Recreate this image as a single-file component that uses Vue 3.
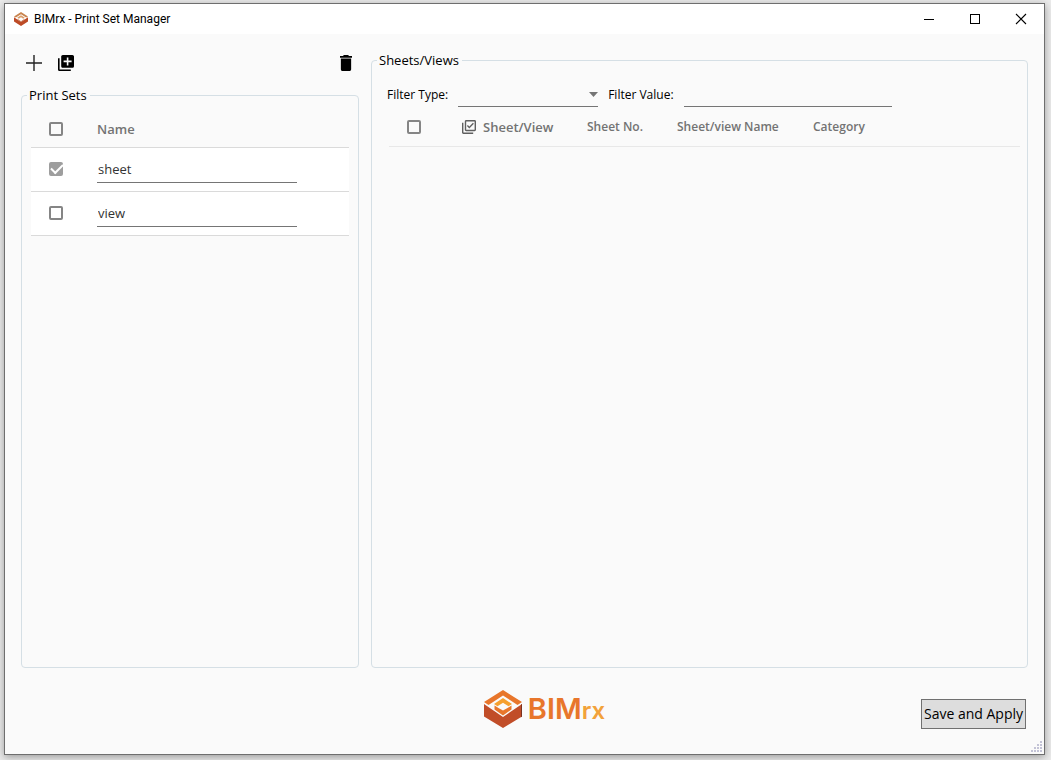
<script setup>
import { ref } from 'vue'

const sets = ref([
  { name: 'sheet', checked: true },
  { name: 'view', checked: false },
])
const allSets = ref(false)
const allSheets = ref(false)
const filterType = ref('')
const filterValue = ref('')
const removeChecked = () => {
  sets.value = sets.value.filter((s) => !s.checked)
}
const addSet = () => sets.value.push({ name: '', checked: false })
const duplicateChecked = () => {
  sets.value.push(...sets.value.filter((s) => s.checked).map((s) => ({ ...s, checked: false })))
}
</script>

<template>
  <div class="desktop">
    <div class="window">
      <header class="titlebar">
        <svg class="app-icon" viewBox="0 0 38 38" aria-hidden="true">
          <path d="M19 0 38 12 33 15 19 6 5 15 0 12Z" fill="#c9854f" />
          <path d="M19 9 29 15 25 18 19 14 13 18 9 15Z" fill="#dd9d6a" />
          <path d="M9 18 19 25 29 18V20L19 27 9 20Z" fill="#b9653c" />
          <path d="M0 14 19 27 38 14V26L19 38 0 26Z" fill="#bd4b27" />
        </svg>
        <h1>BIMrx - Print Set Manager</h1>
        <div class="controls">
          <button type="button" aria-label="Minimize">
            <svg viewBox="0 0 10 10" shape-rendering="crispEdges"><path d="M0 5h10v1H0z" /></svg>
          </button>
          <button type="button" aria-label="Maximize">
            <svg viewBox="0 0 10 10" shape-rendering="crispEdges"><path d="M.5 .5h9v9h-9z" fill="none" stroke="#000" /></svg>
          </button>
          <button type="button" aria-label="Close">
            <svg viewBox="0 0 10 10"><path d="M0 0 10 10M10 0 0 10" fill="none" stroke="#000" stroke-width="1.1" /></svg>
          </button>
        </div>
      </header>

      <main class="content">
        <section class="left">
          <div class="toolbar">
            <button type="button" aria-label="Add print set" @click="addSet">
              <svg width="16" height="16" viewBox="0 0 16 16"><path d="M7.3 0h1.4v7.3H16v1.4H8.7V16H7.3V8.7H0V7.3h7.3z" fill="#222" /></svg>
            </button>
            <button type="button" aria-label="Duplicate print set" @click="duplicateChecked">
              <svg width="16" height="16" viewBox="2 2 20 20"><path d="M4 6H2v14c0 1.100.9 2 2 2h14v-2H4V6zm16-4H8c-1.100 0-2 .9-2 2v12c0 1.100.9 2 2 2h12c1.100 0 2-.9 2-2V4c0-1.100-.9-2-2-2zm-1 9h-4v4h-2v-4H9V9h4V5h2v4h4v2z" /></svg>
            </button>
            <button type="button" class="delete" aria-label="Delete print set" @click="removeChecked">
              <svg width="12" height="16" viewBox="5 3 14 18" preserveAspectRatio="none"><path d="M6 19c0 1.100.9 2 2 2h8c1.100 0 2-.9 2-2V7H6v12zM19 4h-3.500l-1-1h-5l-1 1H5v2h14V4z" /></svg>
            </button>
          </div>

          <fieldset class="panel">
            <legend>Print Sets</legend>
            <table class="sets">
              <thead>
                <tr>
                  <th class="check-col"><input v-model="allSets" type="checkbox" aria-label="Select all print sets" /></th>
                  <th>Name</th>
                </tr>
              </thead>
              <tbody>
                <tr v-for="(set, i) in sets" :key="i">
                  <td class="check-col"><input v-model="set.checked" type="checkbox" :aria-label="'Select ' + set.name" /></td>
                  <td><input v-model="set.name" class="line-input name-input" type="text" aria-label="Print set name" /></td>
                </tr>
              </tbody>
            </table>
          </fieldset>
        </section>

        <fieldset class="panel right">
          <legend>Sheets/Views</legend>
          <div class="filters">
            <label for="filter-type">Filter Type:</label>
            <div class="select-wrap">
              <select id="filter-type" v-model="filterType" class="line-input">
                <option value=""></option>
              </select>
              <svg class="arrow" width="9" height="5" viewBox="0 0 9 5" aria-hidden="true"><path d="M0 0h9L4.500 5z" /></svg>
            </div>
            <label for="filter-value">Filter Value:</label>
            <input id="filter-value" v-model="filterValue" class="line-input value-input" type="text" />
          </div>
          <table class="sheets">
            <thead>
              <tr>
                <th class="check-col"><input v-model="allSheets" type="checkbox" aria-label="Select all sheets" /></th>
                <th class="type-col">
                  <span class="with-icon">
                    <svg width="14" height="14" viewBox="2 2 20 20" aria-hidden="true"><path d="M20 2H8c-1.100 0-2 .9-2 2v12c0 1.100.9 2 2 2h12c1.100 0 2-.9 2-2V4c0-1.100-.9-2-2-2zm0 14H8V4h12v12zM12.470 14 9 10.500l1.400-1.410 2.070 2.080L17.600 6 19 7.410 12.470 14zM4 6H2v14c0 1.100.9 2 2 2h14v-2H4V6z" fill="#5f5f5f" /></svg>
                    Sheet/View
                  </span>
                </th>
                <th class="no-col">Sheet No.</th>
                <th class="name-col">Sheet/view Name</th>
                <th>Category</th>
              </tr>
            </thead>
          </table>
        </fieldset>
      </main>

      <footer class="footer">
        <div class="brand">
          <svg width="38" height="38" viewBox="0 0 38 38" aria-hidden="true">
            <path d="M19 0 38 12 33.500 15 19 5.500 4.500 15 0 12Z" fill="#e8762b" />
            <path d="M19 8 28 14 24.500 16.300 19 12.700 13.500 16.300 10 14Z" fill="#f6a02f" />
            <path d="M10.500 15.500 14.500 18 19 20.500 23.500 18 27.500 15.500V19.500L19 25.500 10.500 19.500Z" fill="#e8762b" />
            <path d="M0 14 19 27 38 14V26.500L19 38 0 26.500Z" fill="#c14d28" />
            <path d="M37 14.700 38 14V26.500L37 27.200Z" fill="#7a3320" />
          </svg>
          <span class="wordmark">BIM<span>rx</span></span>
        </div>
        <button type="button" class="save">Save and Apply</button>
      </footer>
      <svg class="grip" width="11" height="11" viewBox="0 0 11 11" shape-rendering="crispEdges" aria-hidden="true">
        <path d="M9 0h2v2H9zM6 3h2v2H6zM9 3h2v2H9zM3 6h2v2H3zM6 6h2v2H6zM9 6h2v2H9zM0 9h2v2H0zM3 9h2v2H3zM6 9h2v2H6zM9 9h2v2H9z" fill="#c3c3d6" />
      </svg>
    </div>
  </div>
</template>

<style>
html,
body {
  margin: 0;
  background: #ebebeb;
}
</style>

<style scoped>
* {
  box-sizing: border-box;
}
.desktop {
  min-height: 100vh;
  padding: 3px 6px 5px 4px;
  display: flex;
  overflow: hidden;
  font-family: 'Open Sans', 'Noto Sans', sans-serif;
  font-size: 13px;
  line-height: 20px;
  color: #000;
}
.window {
  position: relative;
  flex: 1;
  display: flex;
  flex-direction: column;
  border: 1px solid #6e6e6e;
  background: #fafafa;
  box-shadow: 0 2px 8px rgba(0, 0, 0, 0.35);
}
.titlebar {
  display: flex;
  align-items: center;
  height: 30px;
  padding-left: 9px;
  gap: 6px;
  background: #fff;
}
.app-icon {
  width: 14px;
  height: 14px;
}
h1 {
  margin: 0;
  font-family: Roboto, 'Open Sans', sans-serif;
  font-size: 12px;
  font-weight: 400;
}
button {
  font: inherit;
  color: inherit;
  margin: 0;
  padding: 0;
  border: 0;
  background: none;
}
.controls {
  display: flex;
  align-self: stretch;
  margin-left: auto;
}
.controls button {
  display: grid;
  place-items: center;
  width: 46px;
}
.controls svg {
  width: 10px;
  height: 10px;
  overflow: visible;
}
.content {
  flex: 1;
  display: grid;
  grid-template-columns: 338px 1fr;
  gap: 12px;
  padding: 0 16px;
}
.left {
  display: flex;
  flex-direction: column;
}
.toolbar {
  display: flex;
  gap: 16px;
  height: 51px;
  padding: 21px 7px 0 5px;
}
.toolbar button {
  height: 16px;
}
.toolbar svg {
  display: block;
}
.delete {
  margin-left: auto;
}
.panel {
  flex: 1;
  min-width: 0;
  margin: 0;
  padding: 3px 9px 8px 9px;
  border: 1px solid #d5dfe5;
  border-radius: 4px;
}
.right {
  margin-top: 16px;
  padding: 12px 7px 8px 15px;
}
legend {
  padding: 0 3px 0 2px;
  font-size: 13px;
}
.panel legend {
  margin-left: -4px;
}
.right legend {
  margin-left: -10px;
}
table {
  width: 100%;
  border-collapse: collapse;
  table-layout: fixed;
}
th,
td {
  padding: 0;
  text-align: left;
  vertical-align: middle;
}
th {
  font-weight: 600;
  color: #737373;
}
.sets tr {
  height: 44px;
  border-bottom: 1px solid #dadada;
}
.sets thead tr {
  height: 39px;
}
.sets th {
  padding-top: 3px;
}
.sets tbody tr {
  background: #fff;
}
.check-col {
  width: 66px;
}
.check-col input {
  margin-left: 18px;
}
input[type='checkbox'] {
  appearance: none;
  display: grid;
  place-items: center;
  width: 14px;
  height: 14px;
  margin-top: 0;
  margin-right: 0;
  margin-bottom: 0;
  border: 2px solid #858585;
  border-radius: 2px;
}
input[type='checkbox']:checked {
  border-color: #9e9e9e;
  background: #9e9e9e;
}
input[type='checkbox']:checked::after {
  content: '';
  width: 10px;
  height: 5px;
  margin-top: -3px;
  border: solid #fff;
  border-width: 0 0 2px 2px;
  transform: rotate(-45deg);
}
.line-input {
  appearance: none;
  height: 24px;
  margin: 0;
  padding: 0 1px;
  border: 0;
  border-bottom: 1px solid #757575;
  border-radius: 0;
  outline: 0;
  background: transparent;
  font: inherit;
  color: #333;
}
.name-input {
  display: block;
  width: 200px;
  height: 27px;
}
.filters {
  display: flex;
  align-items: center;
  gap: 10px;
  height: 26px;
  font-size: 12px;
}
.select-wrap {
  position: relative;
  width: 140px;
}
.select-wrap select {
  display: block;
  width: 100%;
}
.arrow {
  position: absolute;
  right: 0;
  top: 9px;
  fill: #757575;
  pointer-events: none;
}
.value-input {
  width: 208px;
}
.sheets {
  width: calc(100% - 2px);
  margin-left: 2px;
}
.sheets tr {
  height: 38px;
  border-bottom: 1px solid #e8e8e8;
}
.sheets th {
  font-size: 12px;
}
.sheets .check-col {
  width: 73px;
}
.sheets .type-col {
  width: 125px;
  font-size: 13px;
}
.no-col {
  width: 90px;
}
.name-col {
  width: 136px;
}
.with-icon {
  display: flex;
  align-items: center;
  gap: 7px;
}
.footer {
  display: grid;
  grid-template-columns: 1fr auto 1fr;
  align-items: center;
  height: 86px;
  padding: 0 18px 4px 58px;
}
.brand {
  grid-column: 2;
  display: flex;
  align-items: center;
  gap: 6px;
}
.wordmark {
  padding-top: 2px;
  font-family: Inter, sans-serif;
  font-size: 29px;
  font-weight: 600;
  line-height: 36px;
  color: #e8762b;
}
.wordmark span {
  font-size: 24px;
  color: #f2a23a;
}
.save {
  justify-self: end;
  height: 30px;
  margin-top: 10px;
  padding: 0 2px;
  border: 1px solid #707070;
  background: #ddd;
  font-size: 14px;
}
.grip {
  position: absolute;
  right: 2px;
  bottom: 2px;
}
</style>
